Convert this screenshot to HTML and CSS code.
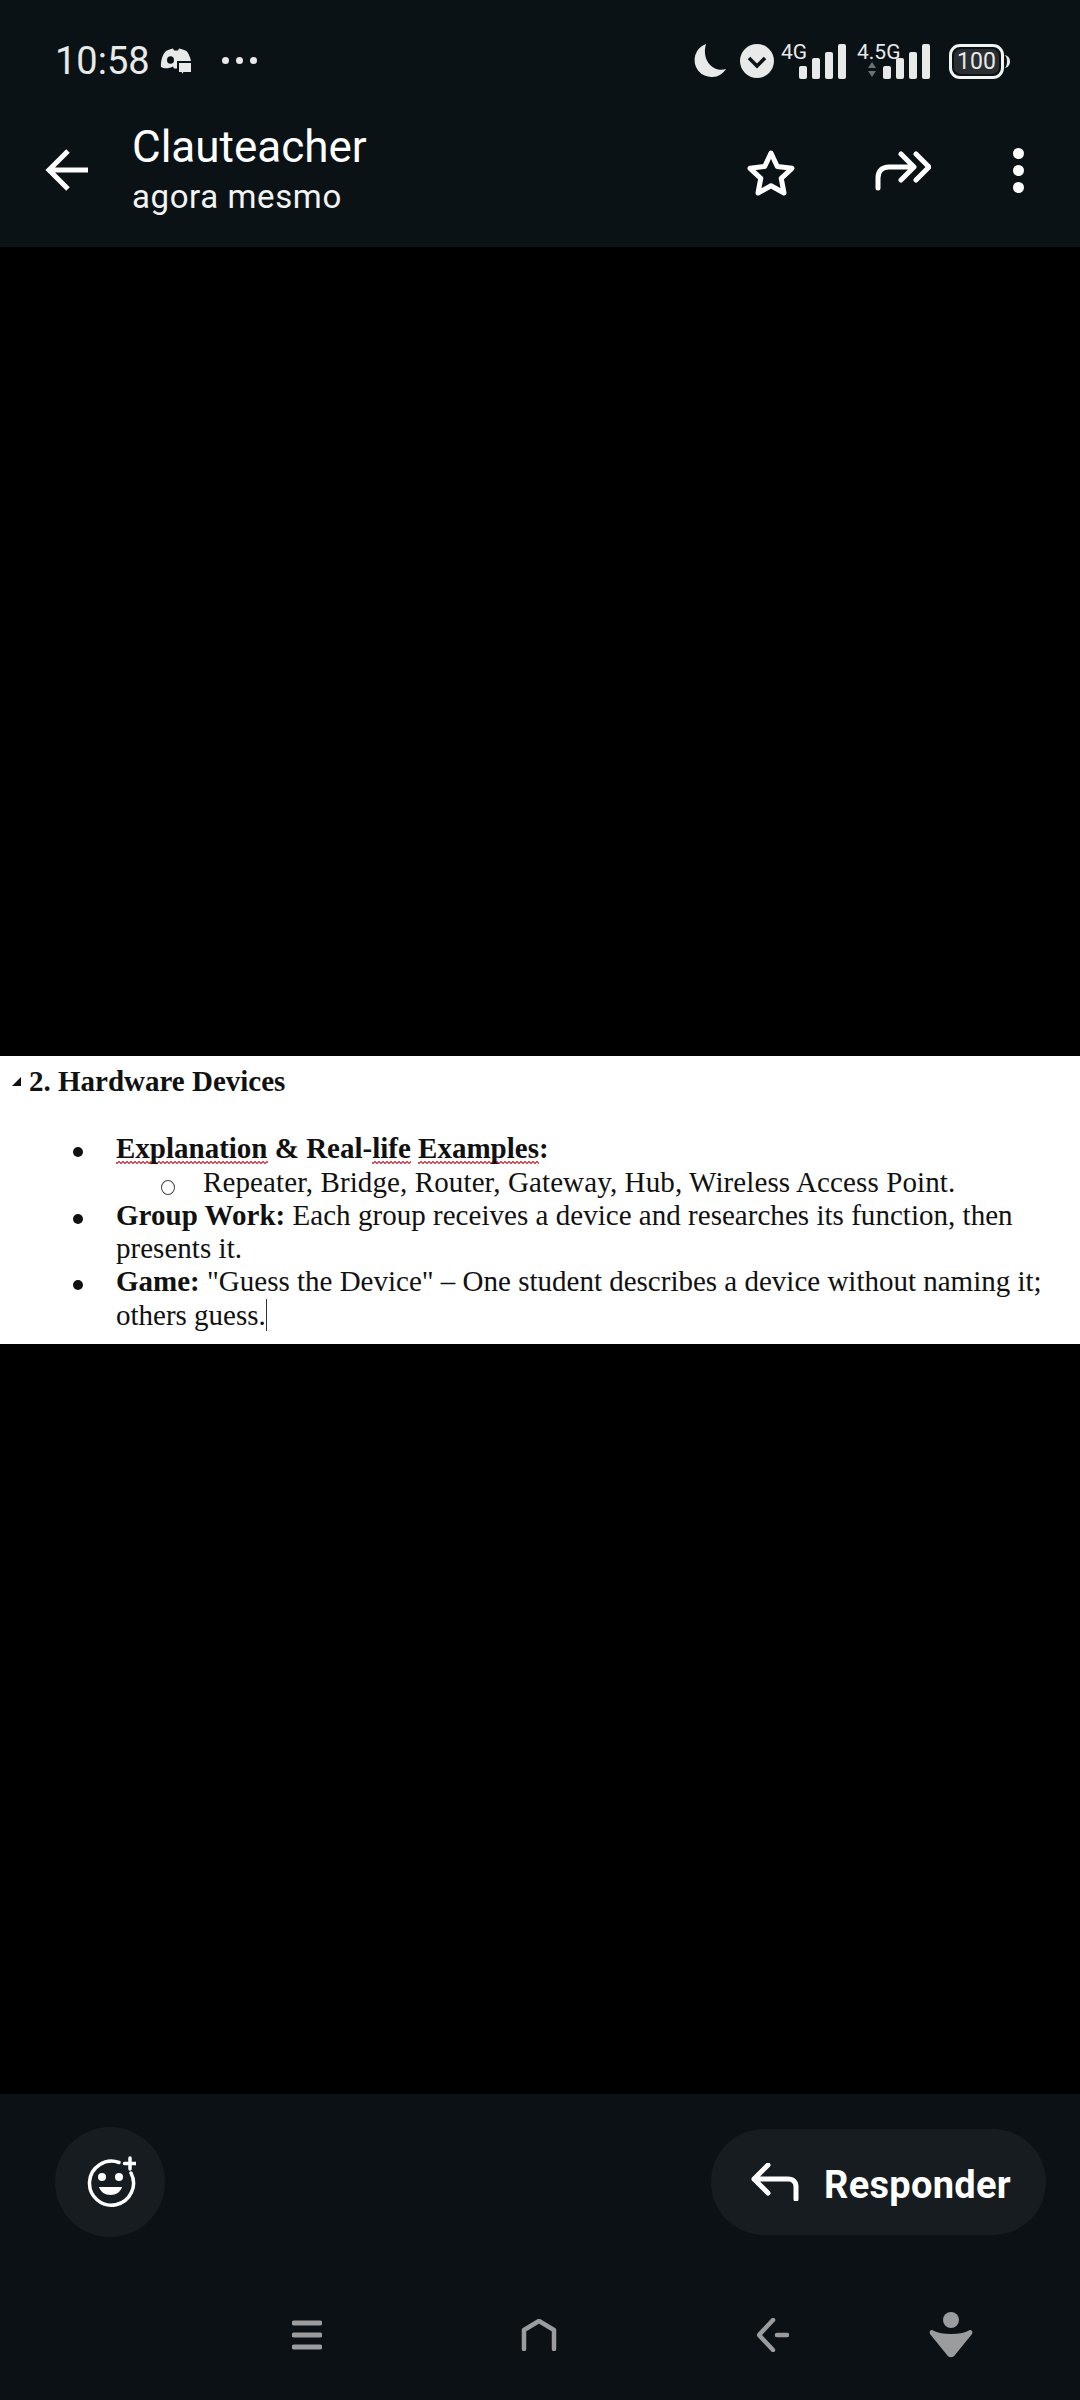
FILE: index.html
```html
<!DOCTYPE html>
<html>
<head>
  <meta charset="UTF-8">
  <meta name="viewport" content="width=device-width, initial-scale=1.0">
  <title>Clauteacher</title>
  <link rel="stylesheet" href="styles.css">
</head>
<body>
  <header class="top">
    <div class="status">
      <span class="time">10:58</span>
      <svg class="discord" width="32" height="28" viewBox="0 0 32 28">
        <path fill="#e8e9e9" d="M6 3C9 1.500 12 .5 13 .5l1 2h4l1-2c3 .5 6 1.500 8 3 2 3 3.500 6 4 10H18v7h-4l-1-2c-3 1.500-8 3-12 .5C.5 12 3 6 6 3z"/>
        <ellipse cx="10.500" cy="12" rx="3.500" ry="3.800" fill="#0b1215"/>
        <path fill="#e8e9e9" stroke="#0b1215" stroke-width="2" d="M18 14h14v11h-8l-2 3-1-3h-3z"/>
      </svg>
      <span class="dots"><i></i><i></i><i></i></span>
      <div class="status-right">
        <svg class="moon" width="34" height="34" viewBox="0 0 34 34">
          <path fill="#e8e9e9" d="M14 0a17 17 0 1 0 20 25C22 29 9 17 14 0z"/>
        </svg>
        <svg class="vpn" width="34" height="34" viewBox="0 0 34 34">
          <circle cx="17" cy="17" r="17" fill="#e8e9e9"/>
          <path d="M9 14l8 8 8-8" fill="none" stroke="#0b1215" stroke-width="3.500"/>
        </svg>
        <svg class="sim" width="66" height="36" viewBox="0 0 66 36">
          <text class="net" x="0" y="15">4G</text>
          <rect x="18" y="22" width="8" height="13" rx="2" fill="#e8e9e9"/>
          <rect x="31" y="14" width="8" height="21" rx="2" fill="#e8e9e9"/>
          <rect x="44" y="8" width="8" height="27" rx="2" fill="#e8e9e9"/>
          <rect x="57" y="0" width="8" height="35" rx="2" fill="#e8e9e9"/>
        </svg>
        <svg class="sim-two" width="74" height="36" viewBox="0 0 74 36">
          <text class="net" x="0" y="15">4.5G</text>
          <path d="M15 18l4 6h-8zM11 27h8l-4 6z" fill="#6d7071"/>
          <rect x="26" y="22" width="8" height="13" rx="2" fill="#e8e9e9"/>
          <rect x="39" y="14" width="8" height="21" rx="2" fill="#e8e9e9"/>
          <rect x="52" y="8" width="8" height="27" rx="2" fill="#e8e9e9"/>
          <rect x="65" y="0" width="8" height="35" rx="2" fill="#e8e9e9"/>
        </svg>
        <div class="battery"><span>100</span></div>
      </div>
    </div>
    <div class="appbar">
      <svg class="back" width="44" height="44" viewBox="0 0 44 44">
        <path d="M43 22H4M23 3L4 22l19 19" fill="none" stroke="#fff" stroke-width="5"/>
      </svg>
      <div class="title">
        <div class="name">Clauteacher</div>
        <div class="when">agora mesmo</div>
      </div>
      <svg class="star" width="50" height="48" viewBox="0 0 50 48">
        <path d="M25 4l6.300 13.500 14.700 1.800-10.800 10 2.800 14.700L25 36.800 12 44l2.800-14.700L4 19.300l14.700-1.800z" fill="none" stroke="#fff" stroke-width="5" stroke-linejoin="round"/>
      </svg>
      <svg class="forward" width="56" height="40" viewBox="0 0 56 40">
        <path d="M3 37V27c0-7 4-11 11-11h21M26 3l13 13-13 13M41 3l13 13-13 13" fill="none" stroke="#fff" stroke-width="5" stroke-linecap="round" stroke-linejoin="round"/>
      </svg>
      <span class="more"><i></i><i></i><i></i></span>
    </div>
  </header>

  <main class="viewer">
    <section class="doc">
      <h2 class="doc-title"><span class="caret"></span>2. Hardware Devices</h2>
      <ul class="list">
        <li>
          <b><span class="typo">Explanation</span> &amp; Real-<span class="typo">life</span> <span class="typo">Examples</span>:</b>
          <ul class="sublist">
            <li>Repeater, Bridge, Router, Gateway, Hub, Wireless Access Point.</li>
          </ul>
        </li>
        <li class="group"><b>Group Work:</b> Each group receives a device and researches its function, then presents it.</li>
        <li><b>Game:</b> "Guess the Device" – One student describes a device without naming it; others guess.<span class="cursor"></span></li>
      </ul>
    </section>
  </main>

  <footer class="bottom">
    <div class="actions">
      <div class="react">
        <svg width="52" height="52" viewBox="0 0 52 52">
          <path d="M35 6.500A22 22 0 1 0 47 17" fill="none" stroke="#fff" stroke-width="3.500" stroke-linecap="round"/>
          <path d="M46 2v11M40.500 7.500h11" stroke="#fff" stroke-width="3.500" stroke-linecap="round"/>
          <circle cx="18" cy="21" r="4" fill="#fff"/>
          <circle cx="35" cy="21" r="4" fill="#fff"/>
          <path d="M15 31h23c-1.500 5-6 8-11.500 8s-10-3-11.500-8z" fill="#fff"/>
        </svg>
      </div>
      <div class="reply">
        <svg width="48" height="38" viewBox="0 0 48 38">
          <path d="M45 36V24c0-5-3-8-8-8H3M17 2L3 16l14 14" fill="none" stroke="#fff" stroke-width="5" stroke-linecap="round" stroke-linejoin="round"/>
        </svg>
        <span>Responder</span>
      </div>
    </div>
    <nav class="nav">
      <svg class="nav-menu" width="30" height="30" viewBox="0 0 30 30">
        <path d="M2 3h26M2 15h26M2 27h26" stroke="#9a9c9d" stroke-width="5" stroke-linecap="round"/>
      </svg>
      <svg class="nav-home" width="36" height="32" viewBox="0 0 36 32">
        <path d="M3 30V11L18 2l15 9v19" fill="none" stroke="#9a9c9d" stroke-width="4.500" stroke-linecap="round" stroke-linejoin="round"/>
      </svg>
      <svg class="nav-back" width="32" height="34" viewBox="0 0 32 34">
        <path d="M16 2L2 17l14 15M20 17h10" fill="none" stroke="#9a9c9d" stroke-width="4.500" stroke-linecap="round" stroke-linejoin="round"/>
      </svg>
      <svg class="nav-person" width="44" height="48" viewBox="0 0 44 48">
        <circle cx="22" cy="9" r="8" fill="#9a9c9d"/>
        <path d="M3 19c6 3 12 4 19 4s13-1 19-4c2 0 3 2 2 4L26 44c-2 3-6 3-8 0L1 23c-1-2 0-4 2-4z" fill="#9a9c9d"/>
      </svg>
    </nav>
  </footer>
</body>
</html>
```

FILE: styles.css
```css
* {
  box-sizing: border-box;
}
body {
  margin: 0;
  width: 1080px;
  height: 2400px;
  background-color: #000;
  font-family: Roboto, sans-serif;
  color: #fff;
  display: flex;
  flex-direction: column;
}

/* top */
.top {
  height: 247px;
  background-color: #0b1215;
}
.status {
  height: 120px;
  display: flex;
  align-items: center;
  padding-left: 55px;
  padding-top: 1px;
}
.time {
  font-size: 38px;
  color: #e8e9e9;
  line-height: 44px;
}
.discord {
  margin-left: 10px;
  margin-top: 2px;
}
.dots {
  display: flex;
  gap: 7px;
  margin-left: 30px;
}
.dots i {
  width: 7px;
  height: 7px;
  border-radius: 50%;
  background-color: #e8e9e9;
}
.status-right {
  margin-left: auto;
  display: flex;
  align-items: flex-start;
  padding-right: 76px;
  height: 36px;
  margin-top: 2px;
}
.status-right svg {
  overflow: visible;
}
.net {
  font-family: Roboto, sans-serif;
  font-size: 21px;
  fill: #e8e9e9;
}
.vpn {
  margin-left: 14px;
}
.sim {
  margin-left: 7px;
}
.sim-two {
  margin-left: 10px;
}
.battery {
  width: 55px;
  height: 35px;
  margin-left: 18px;
  border: 3px solid #f2f3f3;
  border-radius: 11px;
  padding: 2px;
  position: relative;
}
.battery span {
  display: block;
  height: 100%;
  background-color: #2a2e31;
  border-radius: 7px;
  font-size: 23px;
  line-height: 25px;
  text-align: center;
  color: #e8e9e9;
}
.battery::after {
  content: "";
  position: absolute;
  right: -9px;
  top: 8px;
  width: 4px;
  height: 13px;
  border-right: 3px solid #e8e9e9;
  border-radius: 0 6px 6px 0;
}
.appbar {
  display: flex;
  align-items: center;
  height: 100px;
  padding-left: 45px;
}
.title {
  margin-left: 43px;
  margin-top: 4px;
  width: 614px;
}
.name {
  font-size: 44px;
  line-height: 50px;
}
.when {
  font-size: 33px;
  line-height: 50px;
  letter-spacing: 0.6px;
  color: #f2f3f3;
}
.star {
  margin-top: 5px;
}
.forward {
  margin-left: 79px;
  margin-top: 2px;
}
.more {
  display: flex;
  flex-direction: column;
  gap: 6px;
  margin-left: 82px;
}
.more i {
  width: 11px;
  height: 11px;
  border-radius: 50%;
  background-color: #fff;
}

/* document picture */
.viewer {
  height: 1847px;
  background-color: #000;
  padding-top: 809px;
}
.doc {
  height: 288px;
  background-color: #fff;
  color: #111;
  font-family: "Liberation Serif", serif;
  font-size: 29px;
  line-height: 33.3px;
  padding-top: 9px;
  overflow: hidden;
}
.doc-title {
  margin: 0;
  font-size: 29px;
  line-height: 33.3px;
  font-weight: bold;
  padding-left: 29px;
  position: relative;
}
.caret {
  position: absolute;
  left: 12px;
  top: 12px;
  width: 0;
  height: 0;
  border-bottom: 9px solid #111;
  border-left: 9px solid transparent;
}
.list {
  list-style: none;
  margin: 34px 0 0;
  padding: 0 0 0 116px;
}
.list > li {
  position: relative;
}
.list > li::before {
  content: "";
  position: absolute;
  left: -43px;
  top: 15px;
  width: 10px;
  height: 10px;
  border-radius: 50%;
  background-color: #111;
}
.group {
  letter-spacing: 0.03px;
}
.sublist {
  list-style: none;
  margin: 0;
  padding: 0 0 0 87px;
  letter-spacing: 0.11px;
}
.sublist li {
  position: relative;
}
.sublist li::before {
  content: "";
  position: absolute;
  left: -42px;
  top: 14px;
  width: 12px;
  height: 13px;
  border-radius: 50%;
  border: 1.500px solid #444;
}
.typo {
  background-image: linear-gradient(135deg, transparent 40%, #d9505a 40%, #d9505a 60%, transparent 60%), linear-gradient(45deg, transparent 40%, #d9505a 40%, #d9505a 60%, transparent 60%);
  background-size: 4px 3px;
  background-position: 0 100%, 2px 100%;
  background-repeat: repeat-x;
}
.cursor {
  display: inline-block;
  width: 1px;
  height: 32px;
  background-color: #333;
  vertical-align: -6px;
}

/* bottom */
.bottom {
  flex: 1;
  background-color: #0b1114;
}
.actions {
  display: flex;
  justify-content: space-between;
  align-items: center;
  padding: 33px 34px 0 55px;
}
.react {
  width: 110px;
  height: 110px;
  border-radius: 50%;
  background-color: #161c20;
  display: flex;
  align-items: center;
  justify-content: center;
}
.reply {
  width: 335px;
  height: 106px;
  border-radius: 53px;
  background-color: #161c20;
  display: flex;
  align-items: center;
  padding-left: 40px;
  gap: 25px;
}
.reply span {
  font-size: 38px;
  font-weight: 700;
  letter-spacing: 0.3px;
  margin-top: 6px;
}
.nav {
  display: flex;
  align-items: center;
  margin-top: 74px;
  padding-left: 292px;
}
.nav-home {
  margin-left: 199px;
}
.nav-back {
  margin-left: 200px;
}
.nav-person {
  margin-left: 140px;
}
```
